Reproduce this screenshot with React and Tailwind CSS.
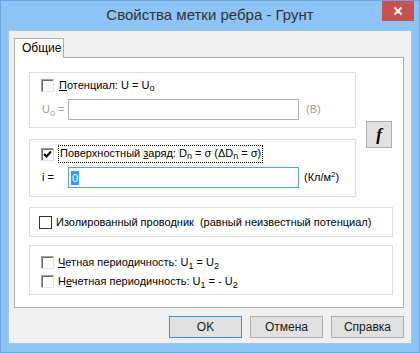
import React from "react";

function ClassicBox({ checked }) {
  return (
    <span className="w-[13px] h-[13px] shrink-0 bg-white border border-t-[#a0a0a0] border-l-[#a0a0a0] border-b-[#e3e3e3] border-r-[#e3e3e3] shadow-[inset_1px_1px_0_#696969] flex items-center justify-center">
      {checked && (
        <svg width="9" height="9" viewBox="0 0 9 9">
          <path d="M1 4 L3.5 6.5 L8 1.5" fill="none" stroke="#000" strokeWidth="2" />
        </svg>
      )}
    </span>
  );
}

function Btn({ children, focused }) {
  return (
    <button
      className={
        "w-[73px] h-[22px] bg-[#e1e1e1] text-[12px] text-[#1a1a1a] border " +
        (focused ? "border-[#3c8fdc]" : "border-[#adadad]")
      }
    >
      {children}
    </button>
  );
}

export default function App() {
  return (
    <div className="w-[420px] h-[353px] bg-[#8dc3f5] border border-[#6aa6e0] flex flex-col font-['Liberation_Sans',Arial,sans-serif] text-black">
      <div className="h-[29px] relative shrink-0">
        <div className="text-center text-[15px] text-[#333333] pt-[5px] leading-[18px]">
          Свойства метки ребра - Грунт
        </div>
        <div className="absolute right-[5px] top-0 w-[32px] h-[20px] bg-[#c75050] flex items-center justify-center">
          <svg width="10" height="10" viewBox="0 0 10 10">
            <path d="M1.5 1.5 L8.5 8.5 M8.5 1.5 L1.5 8.5" stroke="#fff" strokeWidth="2" />
          </svg>
        </div>
      </div>

      <div className="mx-[7px] mb-[8px] flex-1 bg-[#f0f0f0] border border-[#9cc6ee] flex flex-col pl-[5px] pr-[7px] pt-[7px]">
        <div className="flex">
          <div className="w-[50px] h-[20px] -mb-px relative z-10 bg-white border border-b-0 border-[#adadad] text-[12px] leading-[18px] pl-[7px]">
            Общие
          </div>
        </div>

        <div className="h-[251px] bg-white border border-[#adadad] pl-[14px] pt-[14px] flex flex-col">
          <div className="flex items-center">
            <div className="w-[327px] flex flex-col gap-[11px]">
              <div className="h-[56px] border border-[#dcdcdc] pl-[11px] pt-[6px] text-[11px]">
                <div className="flex items-center h-[13px]">
                  <ClassicBox />
                  <span className="ml-[5px] leading-[13px]">
                    <span className="underline">П</span>отенциал: U = U<sub className="text-[9px]">o</sub>
                  </span>
                </div>
                <div className="flex items-center mt-[7px]">
                  <span className="w-[27px] text-[#a0a0a0] pl-px">
                    U<sub className="text-[9px]">o</sub> =
                  </span>
                  <div className="w-[231px] h-[21px] border border-[#adadad] bg-white"></div>
                  <span className="ml-[7px] text-[#a0a0a0]">(В)</span>
                </div>
              </div>

              <div className="h-[58px] border border-[#dcdcdc] pl-[11px] pt-[5px] text-[11px]">
                <div className="flex items-center h-[18px]">
                  <ClassicBox checked />
                  <span className="ml-[4px] h-[18px] border border-dotted border-black px-[1px] leading-[15px]">
                    Поверхностный <span className="underline">з</span>аряд: D<sub className="text-[9px]">n</sub> = σ (ΔD<sub className="text-[9px]">n</sub> = σ)
                  </span>
                </div>
                <div className="flex items-center mt-[4px]">
                  <span className="w-[27px] pl-px">i =</span>
                  <div className="w-[231px] h-[21px] border border-[#569de5] bg-white flex items-center pl-[2px]">
                    <span className="bg-[#3399ff] text-white leading-[14px] px-px">0</span>
                  </div>
                  <span className="ml-[5px]">
                    (Кл/м<sup className="text-[8px]">2</sup>)
                  </span>
                </div>
              </div>
            </div>

            <button className="ml-[10px] w-[26px] h-[27px] bg-[#e1e1e1] border border-[#adadad] flex items-center justify-center">
              <span className="font-['Liberation_Serif',serif] italic font-bold text-[17px] leading-none">f</span>
            </button>
          </div>

          <div className="mt-[10px] w-[364px] h-[30px] border border-[#dcdcdc] pl-[9px] flex items-center text-[11px] whitespace-nowrap">
            <span className="w-[13px] h-[13px] border border-[#333333] bg-white shrink-0"></span>
            <span className="ml-[4px]">Изолированный проводник&nbsp; (равный неизвестный потенциал)</span>
          </div>

          <div className="mt-[8px] w-[364px] h-[50px] border border-[#dcdcdc] pl-[11px] pt-[10px] flex flex-col gap-[6px] text-[11px]">
            <div className="flex items-center h-[13px]">
              <ClassicBox />
              <span className="ml-[4px]">
                <span className="underline">Ч</span>етная периодичность: U<sub className="text-[9px]">1</sub> = U<sub className="text-[9px]">2</sub>
              </span>
            </div>
            <div className="flex items-center h-[13px]">
              <ClassicBox />
              <span className="ml-[4px]">
                Н<span className="underline">е</span>четная периодичность: U<sub className="text-[9px]">1</sub> = - U<sub className="text-[9px]">2</sub>
              </span>
            </div>
          </div>
        </div>

        <div className="mt-[8px] flex justify-end gap-[8px]">
          <Btn focused>OK</Btn>
          <Btn>Отмена</Btn>
          <Btn>Справка</Btn>
        </div>
      </div>
    </div>
  );
}
